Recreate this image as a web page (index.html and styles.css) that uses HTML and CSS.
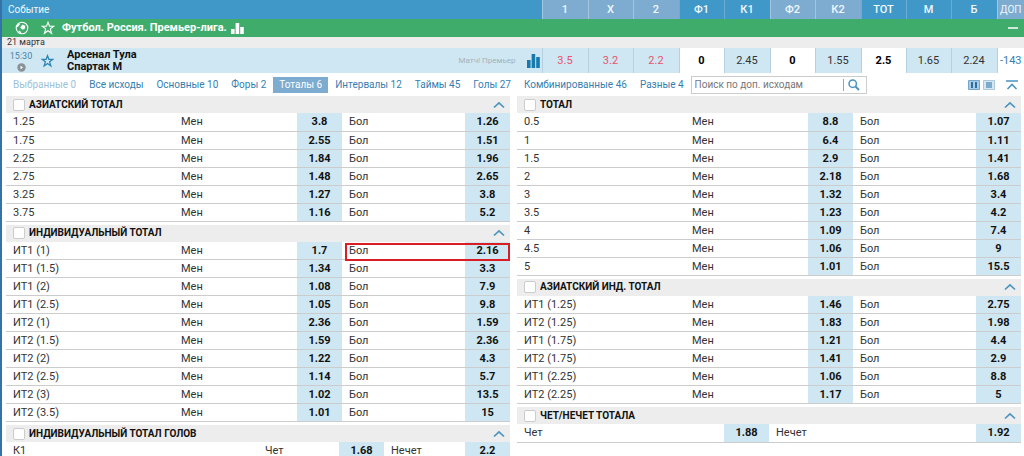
FILE: index.html
```html
<!DOCTYPE html>
<html lang="ru">
<head>
<meta charset="utf-8">
<title>Футбол. Россия. Премьер-лига.</title>
<link rel="stylesheet" href="styles.css">
</head>
<body>
<table class="events">
  <colgroup><col><col class="w46"><col class="w45"><col class="w46"><col class="w45"><col class="w46"><col class="w45"><col class="w46"><col class="w45"><col class="w45"><col class="w46"><col class="w27"></colgroup>
  <thead>
    <tr class="head"><th class="head-event">Событие</th><th class="alt">1</th><th class="alt">X</th><th class="alt">2</th><th>Ф1</th><th>К1</th><th class="alt">Ф2</th><th class="alt">К2</th><th>ТОТ</th><th>М</th><th>Б</th><th class="alt more">ДОП</th></tr>
  </thead>
  <tbody>
    <tr class="league"><td colspan="12"><div class="league-bar">
      <svg class="ball" viewBox="0 0 14 14"><circle cx="7" cy="7" r="5.800" fill="none" stroke="#fff" stroke-width="1.100"/><path d="M7.500 3.500l2.800 1.200-.3 3-2.800 1-2-2.200zM2 4l2-1.500 1 .8-2 2.500-1.500.4zM3 10l2-.3 1.500 2.500-1 .3z" fill="#fff"/></svg>
      <button class="icon star-league" aria-label="В избранное"><svg width="14" height="14" viewBox="0 0 14 14"><path d="M7 1.300l1.500 4h4.200L9.300 7.900l1.300 4.400L7 9.700l-3.600 2.600 1.300-4.400L1.300 5.300h4.200z" fill="none" stroke="#fff" stroke-width="1.100"/></svg></button>
      <h1>Футбол. Россия. Премьер-лига.</h1>
      <svg class="stats" width="13" height="11" viewBox="0 0 13 11"><path d="M0 6h3.600v5H0zM4.600 0h3.600v11H4.600zM9.200 4h3.600v7H9.200z" fill="#fff"/></svg>
      <button class="icon collapse" aria-label="Свернуть"><svg width="10" height="4" viewBox="0 0 10 4"><path d="M0 2h10" stroke="#fff" stroke-width="1.500"/></svg></button>
    </div></td></tr>
    <tr class="date"><td colspan="12">21 марта</td></tr>
    <tr class="match"><td class="match-event"><div class="match-bar">
      <div class="time"><span>15:30</span><svg width="9" height="9" viewBox="0 0 9 9"><circle cx="4.500" cy="4.500" r="4.200" fill="#8b9297"/><path d="M3.500 2.800v3.400l2.500-1.700z" fill="#fff"/></svg></div>
      <button class="icon star-match" aria-label="В избранное"><svg width="13" height="14" viewBox="0 0 14 14"><path d="M7 1.300l1.500 4h4.200L9.300 7.900l1.300 4.400L7 9.700l-3.600 2.600 1.300-4.400L1.300 5.300h4.200z" fill="none" stroke="#2b83b6" stroke-width="1.400"/></svg></button>
      <div class="teams">Арсенал Тула<br>Спартак М</div>
      <span class="channel">Матч! Премьер</span>
      <svg width="13" height="14" viewBox="0 0 13 14"><path d="M0 6h3.600v8H0zM4.600 0h3.600v14H4.600zM9.200 3h3.600v11H9.200z" fill="#1779ae"/></svg>
    </div></td><td class="red">3.5</td><td class="red">3.2</td><td class="red">2.2</td><td class="line">0</td><td>2.45</td><td class="line">0</td><td>1.55</td><td class="line">2.5</td><td>1.65</td><td>2.24</td><td class="more-count"><a href="#">-143</a></td></tr>
  </tbody>
</table>

<div class="toolbar">
  <nav class="tabs">
    <a href="#" class="muted">Выбранные 0</a><a href="#">Все исходы</a><a href="#">Основные 10</a><a href="#">Форы 2</a><a href="#" class="active">Тоталы 6</a><a href="#">Интервалы 12</a><a href="#">Таймы 45</a><a href="#">Голы 27</a><a href="#">Комбинированные 46</a><a href="#">Разные 4</a>
  </nav>
  <div class="search">
    <input type="text" aria-label="Поиск по доп. исходам" placeholder="Поиск по доп. исходам">
    <button class="icon find" aria-label="Найти"><svg width="12" height="12" viewBox="0 0 12 12"><circle cx="4.700" cy="4.700" r="3.700" fill="none" stroke="#4a94c0" stroke-width="1.500"/><path d="M7.500 7.500l3.500 3.500" stroke="#4a94c0" stroke-width="2"/></svg></button>
  </div>
  <div class="views">
    <button class="icon" aria-label="Две колонки"><svg width="12" height="10" viewBox="0 0 12 10"><path d="M.5.500h11v9H.5z" fill="#a9cbe3" stroke="#76a5c8"/><path d="M3 2h2v6H3zM7 2h2v6H7z" fill="#2f6f9f"/></svg></button>
    <button class="icon" aria-label="Одна колонка"><svg width="12" height="10" viewBox="0 0 12 10"><path d="M.5.500h11v9H.5z" fill="#d7e7f2" stroke="#a9c9df"/><path d="M3 2h6v6H3z" fill="#7dabcb"/></svg></button>
    <button class="icon to-top" aria-label="Свернуть все"><svg width="12" height="10" viewBox="0 0 12 10"><path d="M0 1h12M1.500 9L6 4.500 10.500 9" fill="none" stroke="#4a94c0" stroke-width="1.600"/></svg></button>
  </div>
</div>

<main class="markets">
  <div class="column" id="left"></div>
  <div class="column" id="right"></div>
</main>
<script src="markets.js"></script>
</body>
</html>
```
FILE: markets.js
```js
const pairs = (text) => text.split('; ').map((row) => row.split(' | '));

const left = [
  { title: 'АЗИАТСКИЙ ТОТАЛ', names: ['Мен', 'Бол'], rows: pairs('1.25 | 3.8 | 1.26; 1.75 | 2.55 | 1.51; 2.25 | 1.84 | 1.96; 2.75 | 1.48 | 2.65; 3.25 | 1.27 | 3.8; 3.75 | 1.16 | 5.2') },
  { title: 'ИНДИВИДУАЛЬНЫЙ ТОТАЛ', names: ['Мен', 'Бол'], marked: 0, rows: pairs('ИТ1 (1) | 1.7 | 2.16; ИТ1 (1.5) | 1.34 | 3.3; ИТ1 (2) | 1.08 | 7.9; ИТ1 (2.5) | 1.05 | 9.8; ИТ2 (1) | 2.36 | 1.59; ИТ2 (1.5) | 1.59 | 2.36; ИТ2 (2) | 1.22 | 4.3; ИТ2 (2.5) | 1.14 | 5.7; ИТ2 (3) | 1.02 | 13.5; ИТ2 (3.5) | 1.01 | 15') },
  { title: 'ИНДИВИДУАЛЬНЫЙ ТОТАЛ ГОЛОВ', names: ['Чет', 'Нечет'], layout: 'half', rows: pairs('К1 | 1.68 | 2.2') },
];

const right = [
  { title: 'ТОТАЛ', names: ['Мен', 'Бол'], rows: pairs('0.5 | 8.8 | 1.07; 1 | 6.4 | 1.11; 1.5 | 2.9 | 1.41; 2 | 2.18 | 1.68; 3 | 1.32 | 3.4; 3.5 | 1.23 | 4.2; 4 | 1.09 | 7.4; 4.5 | 1.06 | 9; 5 | 1.01 | 15.5') },
  { title: 'АЗИАТСКИЙ ИНД. ТОТАЛ', names: ['Мен', 'Бол'], rows: pairs('ИТ1 (1.25) | 1.46 | 2.75; ИТ2 (1.25) | 1.83 | 1.98; ИТ1 (1.75) | 1.21 | 4.4; ИТ2 (1.75) | 1.41 | 2.9; ИТ1 (2.25) | 1.06 | 8.8; ИТ2 (2.25) | 1.17 | 5') },
  { title: 'ЧЕТ/НЕЧЕТ ТОТАЛА', names: ['Чет', 'Нечет'], layout: 'plain', rows: pairs(' | 1.88 | 1.92') },
];

function marketHtml(market) {
  const layout = market.layout || 'third';
  const label = layout !== 'plain';
  const rows = market.rows.map(([name, first, second], i) => {
    const mark = market.marked === i;
    return `<tr>${label ? `<td>${name}</td>` : ''}
      <td>${market.names[0]}</td><td class="odds">${first}</td>
      <td class="${mark ? 'marked' : ''}">${market.names[1]}</td><td class="odds">${second}</td></tr>`;
  }).join('');
  return `<section class="market">
    <header class="market-head">
      <label><input type="checkbox">${market.title}</label>
      <button class="icon" aria-label="Свернуть"><svg width="12" height="8" viewBox="0 0 12 8"><path d="M1 6.500L6 1.800l5 4.700" fill="none" stroke="#4a94c0" stroke-width="1.700"/></svg></button>
    </header>
    <table class="lines"><colgroup>${label ? `<col class="label-${layout}">` : ''}<col><col class="w45"><col><col class="w45"></colgroup>
    <tbody>${rows}</tbody></table>
  </section>`;
}

document.getElementById('left').innerHTML = left.map(marketHtml).join('');
document.getElementById('right').innerHTML = right.map(marketHtml).join('');
```
FILE: styles.css
```css
* { box-sizing: border-box; }
html { overflow: hidden; }
body {
  margin: 0;
  border-left: 2px solid #3472a8;
  background: #fff;
  color: #333;
  font: 11px/16px Roboto, "Noto Sans", sans-serif;
}
a { color: #3580b0; text-decoration: none; }
table { width: 100%; table-layout: fixed; border-collapse: collapse; }
td, th { padding: 0; }
.icon { display: flex; padding: 0; border: 0; background: none; }

.w27 { width: 27px; }
.w45 { width: 45px; }
.w46 { width: 46px; }

.head { height: 19px; background: #4098c8; color: #f0f8fd; }
.head th { border-left: 1px solid #6badd2; font-weight: 500; }
.head .alt { background: #7dacd0; border-left-color: #a4c5de; }
.head .more { font-size: 10px; font-weight: normal; }
.head .head-event { padding-left: 6px; border: 0; font-size: 10px; font-weight: normal; text-align: left; }

.league { background: #40ac6b; }
.league-bar { display: flex; align-items: center; height: 18px; padding: 0 6px 0 13px; }
.ball { width: 14px; height: 14px; }
.star-league { margin-left: 12px; }
.league h1 { margin: 0 0 0 7px; color: #fff; font-size: 11px; line-height: 18px; }
.stats { margin-left: 4px; }
.collapse { margin-left: auto; }

.date { background: #ededed; font-size: 9px; line-height: 11px; }
.date td { padding-left: 5px; }

.match { background: #cfe7f2; text-align: center; }
.match td { border-left: 1px solid #b5d0df; }
.match .match-event { border: 0; }
.match .red { color: #e8536c; }
.match .line { background: #fff; color: #000; font-weight: bold; }
.match .more-count { background: #fff; }
.match-bar { display: flex; align-items: center; height: 25px; padding-right: 2px; text-align: left; }
.time { display: flex; flex-direction: column; align-items: center; width: 38px; color: #4684aa; font-size: 9px; line-height: 13px; }
.star-match { margin-left: 1px; }
.teams { margin-left: 13px; color: #111; font-weight: bold; line-height: 12px; }
.channel { margin: 0 11px 0 auto; color: #a3b3bc; font-size: 8px; }

.toolbar { display: flex; align-items: center; height: 23px; padding: 0 6px 0 5px; }
.tabs { display: flex; gap: 1px; white-space: nowrap; }
.tabs a { padding: 0 6px; font-size: 10px; }
.tabs .muted { color: #9dc1d8; }
.tabs .active { background: #7dacd0; color: #fff; }
.search { display: flex; align-items: center; width: 176px; height: 18px; margin-left: 1px; border: 1px solid #ccc; }
.search input { flex: 1; min-width: 0; height: 12px; padding: 0 3px; border: 0; border-right: 1px solid #7dacd0; outline: 0; font: inherit; font-size: 10px; }
.search input::placeholder { color: #777; }
.find { margin: 0 6px 0 4px; }
.views { display: flex; gap: 3px; margin-left: auto; }
.to-top { margin-left: 8px; }

.markets { display: grid; grid-template-columns: 1fr 1fr; gap: 7px; padding: 0 3px 0 4px; }
.column { display: flex; flex-direction: column; gap: 3px; }
.market-head { display: flex; align-items: center; justify-content: space-between; height: 17px; padding: 0 5px 0 7px; background: #ededed; }
.market-head label { display: flex; align-items: center; gap: 4px; color: #111; font-size: 10px; font-weight: bold; }
.market-head input { width: 12px; height: 12px; margin: 0; appearance: none; border: 1px solid #ccc; border-radius: 2px; background: #fff; }
.label-third { width: 33.33%; }
.label-half { width: 50%; }
.lines tr { height: 18px; border-bottom: 1px solid #ccc; }
.lines td { padding-left: 7px; line-height: 17px; }
.lines .odds { padding: 0; background: #cfe7f2; color: #111; font-weight: bold; text-align: center; }
.lines .marked { position: relative; }
.marked::after { content: ""; position: absolute; top: 1px; bottom: -2px; left: 3px; right: -45px; z-index: 1; border: 2px solid #dc1c24; }
```
